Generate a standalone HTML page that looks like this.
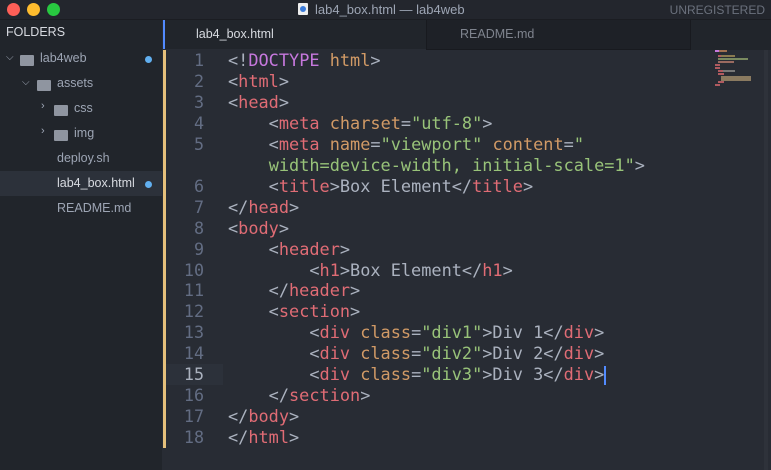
<!DOCTYPE html>
<html><head><style>
*{margin:0;padding:0;box-sizing:border-box}
body{width:771px;height:470px;background:#282c34;overflow:hidden;position:relative;font-family:"Liberation Sans",sans-serif}
#title{position:absolute;left:0;top:0;width:771px;height:20px;background:#23262d;border-bottom:1px solid #1b1d22}
.dot{position:absolute;top:3px;width:13px;height:13px;border-radius:50%}
#unreg{position:absolute;right:6px;top:3px;color:#6b717d;font-size:12px}
#side{position:absolute;left:0;top:20px;width:162px;height:450px;background:#21252b}
.si{position:absolute;font-size:12.5px;color:#9da5b4;white-space:nowrap}
.fold{display:inline-block;width:14px;height:11px;background:#8f95a0;border-radius:1px;position:absolute}
.bdot{position:absolute;width:7px;height:7px;border-radius:50%;background:#61afef}
#tabs{position:absolute;left:163px;top:20px;width:608px;height:30px;background:#21252b}
.code{position:absolute;left:163px;top:50px;font-family:"DejaVu Sans Mono",monospace;font-size:16.9px;white-space:pre;color:#abb2bf}
.ln{position:absolute;left:163px;width:41px;text-align:right;color:#636d83;font-family:"DejaVu Sans Mono",monospace;font-size:16.7px}
.t{color:#e06c75}.a{color:#d19a66}.s{color:#98c379}.p{color:#c678dd}
</style></head><body>
<div id="title">
<div class="dot" style="left:7px;background:#fe5f57"></div>
<div class="dot" style="left:27px;background:#febc2e"></div>
<div class="dot" style="left:47px;background:#28c840"></div>
<div style="position:absolute;left:298px;top:3px;width:10px;height:12px;background:#eee;border-radius:1px"><div style="margin:3px 2px;width:6px;height:6px;border-radius:50%;background:#3b7bd9"></div></div>
<div style="position:absolute;left:315px;top:2px;color:#9da5b4;font-size:13px">lab4_box.html — lab4web</div>
<div id="unreg">UNREGISTERED</div>
</div>
<div id="side">
<div class="si" style="left:6px;top:5px;color:#d7dae0;font-size:12.5px">FOLDERS</div>
<div class="si" style="left:6px;top:32px;font-size:10px">&#x2335;</div>
<div class="fold" style="left:20px;top:35px"></div>
<div class="si" style="left:40px;top:31px">lab4web</div>
<div class="bdot" style="left:145px;top:36px"></div>
<div class="si" style="left:22px;top:57px;font-size:10px">&#x2335;</div>
<div class="fold" style="left:37px;top:60px"></div>
<div class="si" style="left:57px;top:56px">assets</div>
<div class="si" style="left:41px;top:80px;font-size:11px">›</div>
<div class="fold" style="left:54px;top:85px"></div>
<div class="si" style="left:74px;top:81px">css</div>
<div class="si" style="left:41px;top:105px;font-size:11px">›</div>
<div class="fold" style="left:54px;top:110px"></div>
<div class="si" style="left:74px;top:106px">img</div>
<div class="si" style="left:57px;top:131px">deploy.sh</div>
<div style="position:absolute;left:0;top:151px;width:162px;height:25px;background:#2c313a"></div>
<div class="si" style="left:57px;top:156px;color:#d7dae0">lab4_box.html</div>
<div class="bdot" style="left:145px;top:161px"></div>
<div class="si" style="left:57px;top:181px">README.md</div>
</div>
<div id="tabs">
<div style="position:absolute;left:0;top:0;width:2px;height:30px;background:#528bff"></div>
<div style="position:absolute;left:33px;top:7px;color:#d7dae0;font-size:12.5px">lab4_box.html</div>
<div style="position:absolute;left:263px;top:0;width:265px;height:30px;background:#1e2127;border-left:1px solid #181a1f;border-right:1px solid #181a1f;border-bottom:1px solid #181a1f"></div>
<div style="position:absolute;left:297px;top:7px;color:#7f848e;font-size:12.5px">README.md</div>
<div style="position:absolute;left:0;top:29px;width:263px;height:1px;background:#282c34"></div>
</div>
<div style="position:absolute;left:163px;top:50px;width:3px;height:398px;background:#e5c07b"></div>
<div style="position:absolute;left:166px;top:364px;width:57px;height:21px;background:#2c313a"></div>
<div style="position:absolute;left:764px;top:50px;width:4px;height:420px;background:#2e323a"></div>
<svg style="position:absolute;left:715px;top:48px" width="40" height="40">
<rect x="0" y="2" width="4" height="2" fill="#c678dd"/><rect x="4" y="2" width="8" height="2" fill="#a07050"/>
<rect x="3" y="7" width="3" height="2" fill="#b05a60"/><rect x="6" y="7" width="14" height="2" fill="#8a7a50"/>
<rect x="3" y="10" width="30" height="2" fill="#7a8a60"/><rect x="3" y="13" width="16" height="2" fill="#9a6a60"/>
<rect x="0" y="16" width="5" height="2" fill="#b05a60"/><rect x="0" y="19" width="5" height="2" fill="#b05a60"/>
<rect x="3" y="22" width="5" height="2" fill="#b05a60"/><rect x="8" y="22" width="12" height="2" fill="#777"/>
<rect x="3" y="25" width="6" height="2" fill="#b05a60"/><rect x="6" y="28" width="30" height="5" fill="#8a7a60"/>
<rect x="3" y="33" width="6" height="2" fill="#b05a60"/><rect x="0" y="36" width="5" height="2" fill="#b05a60"/>
</svg>
<div class="ln" style="top:50px;line-height:20.95px">1<br>2<br>3<br>4<br>5<br><br>6<br>7<br>8<br>9<br>10<br>11<br>12<br>13<br>14<br><span style="color:#abb2bf">15</span><br>16<br>17<br>18</div>
<div class="code" style="left:228px;line-height:20.95px">&lt;!<span class="p">DOCTYPE</span> <span class="a">html</span>&gt;
&lt;<span class="t">html</span>&gt;
&lt;<span class="t">head</span>&gt;
    &lt;<span class="t">meta</span> <span class="a">charset</span>=<span class="s">"utf-8"</span>&gt;
    &lt;<span class="t">meta</span> <span class="a">name</span>=<span class="s">"viewport"</span> <span class="a">content</span>=<span class="s">"</span>
    <span class="s">width=device-width, initial-scale=1"</span>&gt;
    &lt;<span class="t">title</span>&gt;Box Element&lt;/<span class="t">title</span>&gt;
&lt;/<span class="t">head</span>&gt;
&lt;<span class="t">body</span>&gt;
    &lt;<span class="t">header</span>&gt;
        &lt;<span class="t">h1</span>&gt;Box Element&lt;/<span class="t">h1</span>&gt;
    &lt;/<span class="t">header</span>&gt;
    &lt;<span class="t">section</span>&gt;
        &lt;<span class="t">div</span> <span class="a">class</span>=<span class="s">"div1"</span>&gt;Div 1&lt;/<span class="t">div</span>&gt;
        &lt;<span class="t">div</span> <span class="a">class</span>=<span class="s">"div2"</span>&gt;Div 2&lt;/<span class="t">div</span>&gt;
        &lt;<span class="t">div</span> <span class="a">class</span>=<span class="s">"div3"</span>&gt;Div 3&lt;/<span class="t">div</span>&gt;<span style="display:inline-block;width:2px;height:19px;background:#528bff;vertical-align:middle"></span>
    &lt;/<span class="t">section</span>&gt;
&lt;/<span class="t">body</span>&gt;
&lt;/<span class="t">html</span>&gt;</div>
</body></html>
